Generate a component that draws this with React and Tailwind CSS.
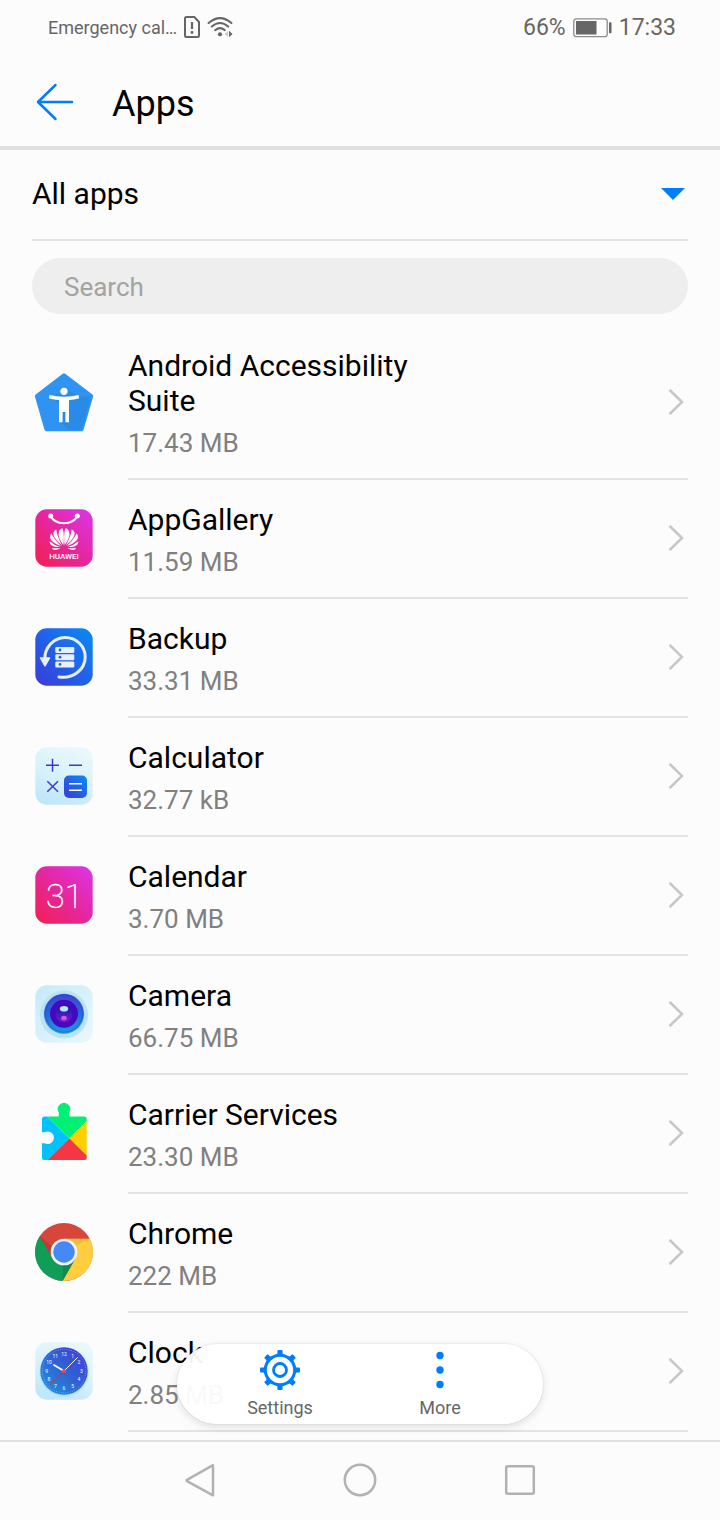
import React from 'react';

function Defs() {
  return (
    <svg className="absolute h-0 w-0" aria-hidden="true">
      <defs>
        <linearGradient id="pink" x1="0" y1="1" x2="1" y2="0">
          <stop offset="0" stopColor="#f3204f" />
          <stop offset="0.5" stopColor="#e5269f" />
          <stop offset="1" stopColor="#dc36ea" />
        </linearGradient>
        <linearGradient id="blue" x1="0" y1="1" x2="1" y2="0">
          <stop offset="0" stopColor="#3a3bd8" />
          <stop offset="0.5" stopColor="#2162ea" />
          <stop offset="1" stopColor="#0a8bf3" />
        </linearGradient>
        <linearGradient id="pale" x1="0.7" y1="0" x2="0.3" y2="1">
          <stop offset="0" stopColor="#e9f8fd" />
          <stop offset="0.5" stopColor="#d8f2fb" />
          <stop offset="1" stopColor="#bfe6fa" />
        </linearGradient>
        <linearGradient id="paleUp" x1="0" y1="0" x2="1" y2="1">
          <stop offset="0" stopColor="#c5eaf9" />
          <stop offset="1" stopColor="#eaf8fd" />
        </linearGradient>
        <linearGradient id="lens" x1="0" y1="0" x2="0" y2="1">
          <stop offset="0" stopColor="#4342d3" />
          <stop offset="0.5" stopColor="#2868dc" />
          <stop offset="1" stopColor="#1b9be4" />
        </linearGradient>
        <linearGradient id="pupil" x1="0" y1="0" x2="0" y2="1">
          <stop offset="0" stopColor="#2410a0" />
          <stop offset="0.5" stopColor="#3a1cc4" />
          <stop offset="1" stopColor="#8a17c4" />
        </linearGradient>
        <linearGradient id="dial" x1="0" y1="1" x2="1" y2="0">
          <stop offset="0" stopColor="#1c9ae0" />
          <stop offset="0.5" stopColor="#2f63d4" />
          <stop offset="1" stopColor="#4438d6" />
        </linearGradient>
      </defs>
    </svg>
  );
}

function AppIcon({ children }) {
  return (
    <svg viewBox="0 0 64 64" className="mb-[3px] h-16 w-16 shrink-0" aria-hidden="true">
      {children}
    </svg>
  );
}

function Tile({ fill }) {
  return <rect x="3.3" y="3.3" width="57.4" height="57.4" rx="11.5" fill={fill} />;
}

function AccessibilityIcon() {
  return (
    <AppIcon>
      <path d="M32 5.3 59.2 26.2 49.6 59.2H14.4L4.9 26.2Z" fill="#2f93f1" stroke="#2f93f1" strokeWidth="4" strokeLinejoin="round" />
      <path d="M18 27 28 34.5V52L36 59.5H49.6L59.2 26.2 47.5 26.5 36 20Z" fill="#2587e2" opacity="0.7" />
      <circle cx="32" cy="21.3" r="3.6" fill="#fff" />
      <path d="M17.5 25Q32 28.4 46.5 25L47.2 28.2Q42 29.6 37 30V52.2H33.4V42H30.6V52.2H27V30Q22 29.6 16.8 28.2Z" fill="#fff" />
    </AppIcon>
  );
}

function GalleryIcon() {
  const half = (
    <g>
      <path d="M31.4 42.6C28 37.5 25.2 31.5 27.2 26.2 28 24.3 29.3 23.5 30.6 23.2 32.3 29.5 32 36 31.4 42.6Z" />
      <path d="M30.2 43C25.5 39 21 33.5 21.4 28.8 21.7 26.8 22.8 25.4 24.3 24.6 25 31.5 27.5 37.5 30.2 43Z" />
      <path d="M29.2 43.8C23.5 41.6 18.6 38.2 18.1 34.2 17.9 32.2 18.4 30.6 19.4 29.4 21.8 35 25.2 39.8 29.2 43.8Z" />
      <path d="M28.2 45C23.5 45.5 19.8 44.2 18.2 41.4 17.7 40.3 17.6 39.2 17.7 38.2 20.8 41.2 24.3 43.5 28.2 45Z" />
      <path d="M28.6 46.3C26 48.4 23.2 49 21.2 47.8 20.6 47.4 20.2 46.9 19.9 46.2 23 46.7 25.8 46.7 28.6 46.3Z" />
    </g>
  );
  return (
    <AppIcon>
      <Tile fill="url(#pink)" />
      <circle cx="18.7" cy="10" r="2.5" fill="#fff" />
      <circle cx="45.3" cy="10" r="2.5" fill="#fff" />
      <path d="M18.7 10C23 19.5 41 19.5 45.3 10" fill="none" stroke="#fff" strokeWidth="2" />
      <g fill="#fff" transform="matrix(1 0 0 0.86 0 2.3)">{half}</g>
      <g fill="#fff" transform="matrix(-1 0 0 0.86 64 2.3)">{half}</g>
      <text x="32" y="53" textAnchor="middle" fontFamily="Roboto, sans-serif" fontSize="8" fontWeight="500" fill="#fff">HUAWEI</text>
    </AppIcon>
  );
}

function BackupIcon() {
  return (
    <AppIcon>
      <Tile fill="url(#blue)" />
      <path d="M12.8 34.5C12.6 22.5 21.5 12.8 32.8 12.4 44.5 12.3 53.4 21.5 53.2 32.4 52.8 44.6 41.5 54 27 52" fill="none" stroke="#e6f0ff" strokeWidth="3" strokeLinecap="round" />
      <path d="M8.5 33H17.5L13 40.8Z" fill="#e6f0ff" stroke="#e6f0ff" strokeWidth="1.5" strokeLinejoin="round" />
      <g fill="#e6f0ff">
        <rect x="23.3" y="22" width="19" height="6" rx="1.2" />
        <rect x="23.3" y="29.2" width="19" height="6" rx="1.2" />
        <rect x="23.3" y="36.4" width="19" height="6" rx="1.2" />
      </g>
      <g fill="#2162ea">
        <circle cx="28" cy="25" r="1.4" />
        <circle cx="28" cy="32.2" r="1.4" />
        <circle cx="28" cy="39.4" r="1.4" />
      </g>
    </AppIcon>
  );
}

function CalculatorIcon() {
  return (
    <AppIcon>
      <Tile fill="url(#pale)" />
      <path d="M14 21.3H27M20.5 14.8V27.8M37 21.3H50M15.3 37.2 26 47.8M26 37.2 15.3 47.8" stroke="#4038c8" strokeWidth="1.5" fill="none" />
      <rect x="32" y="31.5" width="23" height="22.5" rx="5" fill="url(#blue)" />
      <path d="M37 39.7H50M37 46.2H50" stroke="#fff" strokeWidth="1.5" />
    </AppIcon>
  );
}

function CalendarIcon() {
  return (
    <AppIcon>
      <Tile fill="url(#pink)" />
      <text x="32.5" y="44.6" textAnchor="middle" fontFamily="Roboto, sans-serif" fontSize="34" fontWeight="100" fill="#fff" stroke="#fff" strokeWidth="0.5">31</text>
    </AppIcon>
  );
}

function CameraIcon() {
  return (
    <AppIcon>
      <Tile fill="url(#paleUp)" />
      <circle cx="32" cy="32.5" r="24" fill="#b9e3f2" />
      <circle cx="32" cy="31.8" r="20" fill="url(#lens)" />
      <circle cx="32" cy="31.8" r="18.3" fill="none" stroke="#2544b8" strokeWidth="0.7" opacity="0.6" />
      <circle cx="32" cy="31.8" r="14" fill="#4309bc" />
      <circle cx="32" cy="31.8" r="8.5" fill="url(#pupil)" />
      <ellipse cx="32" cy="26.8" rx="4.2" ry="2.8" fill="#b9e6f7" />
      <ellipse cx="32" cy="36" rx="2.8" ry="2.2" fill="#dc55dd" />
    </AppIcon>
  );
}

function CarrierIcon() {
  return (
    <AppIcon>
      <path d="M15 15.5 37.3 37.2 15.5 59H12Q10 59 10 57V42.2H12.5A6.3 6.3 0 1 0 12.5 31.2H10V18Q10 15.5 12.5 15.5Z" fill="#00c3fb" />
      <path d="M15 15.5H26.8V11.6A6.2 6.2 0 1 1 37.2 11.6V15.5H52.5Q54.7 15.5 54.7 18V20L37.3 37.2Z" fill="#00ef75" />
      <path d="M54.7 20V54.5L37.3 37.2Z" fill="#ffd000" />
      <path d="M37.3 37.2 54.7 54.5V57Q54.7 59 52.7 59H15.5Z" fill="#f33745" />
    </AppIcon>
  );
}

function ChromeIcon() {
  return (
    <AppIcon>
      <circle cx="32" cy="32" r="28.9" fill="#d8453a" />
      <path d="M57.8 18.8A29 29 0 0 1 30.5 61L43.4 38.6 32 18.8Z" fill="#ffcd40" />
      <path d="M30.5 61A29 29 0 0 1 7.7 16.3L20.6 38.6H43.4Z" fill="#109d58" />
      <path d="M57.8 18.8H32L43 26Z" fill="#c9a233" opacity="0.35" />
      <path d="M7.7 16.3 20.6 38.6 21 27Z" fill="#7c2d25" opacity="0.3" />
      <path d="M30.5 61 43.4 38.6 31 45Z" fill="#0b6b3c" opacity="0.35" />
      <circle cx="32" cy="32" r="13.3" fill="#f1f3f8" />
      <circle cx="32" cy="32" r="10.7" fill="#4688f4" />
    </AppIcon>
  );
}

function ClockIcon() {
  const numbers = Array.from({ length: 12 }, (_, i) => i + 1);
  return (
    <AppIcon>
      <Tile fill="url(#pale)" />
      <circle cx="32" cy="33" r="24.6" fill="#a9dcf0" opacity="0.6" />
      <circle cx="32" cy="32" r="23.7" fill="url(#dial)" />
      <circle cx="32" cy="32" r="21.8" fill="none" stroke="#fff" strokeWidth="1" strokeDasharray="0.5 1.783" opacity="0.6" />
      <g fill="#fff" fontFamily="Roboto, sans-serif" fontSize="5" textAnchor="middle">
        {numbers.map((n) => {
          const angle = (n * Math.PI) / 6;
          return (
            <text key={n} x={32 + 17.3 * Math.sin(angle)} y={33.8 - 17.3 * Math.cos(angle)}>{n}</text>
          );
        })}
      </g>
      <path d="M32 32 22 26" stroke="#fff" strokeWidth="1.8" strokeLinecap="round" />
      <path d="M32 32 45.5 18.5" stroke="#fff" strokeWidth="1" strokeLinecap="round" />
      <path d="M32 32 18 46" stroke="#a5385e" strokeWidth="0.8" />
      <circle cx="32" cy="32" r="2" fill="#f04458" />
    </AppIcon>
  );
}

const apps = [
  { name: 'Android Accessibility Suite', size: '17.43 MB', Icon: AccessibilityIcon },
  { name: 'AppGallery', size: '11.59 MB', Icon: GalleryIcon },
  { name: 'Backup', size: '33.31 MB', Icon: BackupIcon },
  { name: 'Calculator', size: '32.77 kB', Icon: CalculatorIcon },
  { name: 'Calendar', size: '3.70 MB', Icon: CalendarIcon },
  { name: 'Camera', size: '66.75 MB', Icon: CameraIcon },
  { name: 'Carrier Services', size: '23.30 MB', Icon: CarrierIcon },
  { name: 'Chrome', size: '222 MB', Icon: ChromeIcon },
  { name: 'Clock', size: '2.85 MB', Icon: ClockIcon },
];

function StatusBar() {
  return (
    <div className="flex h-14 items-center justify-between pr-11 pl-12 text-[#666]">
      <div className="flex items-center gap-1.5">
        <span className="text-lg">Emergency cal…</span>
        <svg viewBox="0 0 18 24" className="mb-0.5 h-6 w-[18px]" fill="none" aria-hidden="true">
          <path d="M3.5 2H11.3L16 7V20.5Q16 22 14.5 22H3.5Q2 22 2 20.5V3.5Q2 2 3.5 2Z" stroke="#666" strokeWidth="2" strokeLinejoin="round" />
          <path d="M9 7V14" stroke="#666" strokeWidth="2.2" />
          <circle cx="9" cy="17.5" r="1.4" fill="#666" />
        </svg>
        <svg viewBox="0 0 26 24" className="mb-0.5 h-6 w-[26px]" fill="none" aria-hidden="true">
          <path d="M1.6 8Q13 -1.8 24.4 8M4.8 11.6Q13 4.3 21.2 11.6M8.2 15.2Q13 11 17.8 15.2" stroke="#666" strokeWidth="2" strokeLinecap="round" />
          <circle cx="13" cy="19.3" r="2.1" fill="#666" />
          <path d="M21 16 17.5 19 21 22Z" fill="#ccc" />
          <path d="M22 15.8 25.5 19 22 22.2Z" fill="#666" />
        </svg>
      </div>
      <div className="flex items-center gap-[7px]">
        <span className="text-[23px]">66%</span>
        <svg viewBox="0 0 39 20" className="h-5 w-[39px]" fill="none" aria-hidden="true">
          <rect x="0.8" y="0.8" width="33.4" height="17.9" rx="2.5" stroke="#8c8c8c" strokeWidth="1.3" />
          <rect x="3" y="3" width="20.5" height="13.5" fill="#666" />
          <rect x="36" y="4.3" width="2.5" height="11" rx="0.8" fill="#666" />
        </svg>
        <span className="text-[23px]">17:33</span>
      </div>
    </div>
  );
}

function GearIcon() {
  const angles = [0, 45, 90, 135, 180, 225, 270, 315];
  return (
    <svg viewBox="0 0 42 42" className="h-[42px] w-[42px]" fill="none" stroke="#007dff" aria-hidden="true">
      <circle cx="21" cy="21" r="14.7" strokeWidth="3" />
      <circle cx="21" cy="21" r="6.5" strokeWidth="2.8" />
      {angles.map((a) => (
        <path key={a} d="M16.5 6.2 18.4 4.6V2Q18.4 1 19.4 1H22.6Q23.6 1 23.6 2V4.6L25.5 6.2Z" fill="#007dff" stroke="none" transform={`rotate(${a} 21 21)`} />
      ))}
    </svg>
  );
}

function BottomBar() {
  return (
    <div className="sticky bottom-0">
      <div className="absolute bottom-24 left-1/2 flex h-20 -translate-x-1/2 rounded-full bg-white/95 px-[23px] shadow-[0_3px_8px_rgba(0,0,0,0.12),0_0_2px_rgba(0,0,0,0.14)]">
        <button type="button" className="flex w-40 flex-col items-center pt-[5px]">
          <GearIcon />
          <span className="mt-[5px] text-lg leading-6 text-[#666]">Settings</span>
        </button>
        <button type="button" className="flex w-40 flex-col items-center pt-[5px]">
          <svg viewBox="0 0 42 42" className="h-[42px] w-[42px]" fill="#007dff" aria-hidden="true">
            <circle cx="21" cy="6.5" r="3.7" />
            <circle cx="21" cy="21" r="3.7" />
            <circle cx="21" cy="35.5" r="3.7" />
          </svg>
          <span className="mt-[5px] text-lg leading-6 text-[#666]">More</span>
        </button>
      </div>
      <nav className="flex h-20 justify-center border-t-2 border-[#e0e0e0] bg-[#fcfcfc]" aria-label="System">
        <button type="button" aria-label="Back" className="flex w-40 items-center justify-center">
          <svg viewBox="0 0 36 36" className="h-9 w-9" fill="none" stroke="#b2b2b2" strokeWidth="2.5" strokeLinejoin="round" aria-hidden="true">
            <path d="M31 2.2V32.3L5 18.1Q4 17.5 5 16.8Z" />
          </svg>
        </button>
        <button type="button" aria-label="Home" className="flex w-40 items-center justify-center">
          <svg viewBox="0 0 36 36" className="h-9 w-9" fill="none" stroke="#b2b2b2" strokeWidth="2.5" aria-hidden="true">
            <circle cx="18" cy="17" r="15.2" />
          </svg>
        </button>
        <button type="button" aria-label="Recent apps" className="flex w-40 items-center justify-center">
          <svg viewBox="0 0 36 36" className="h-9 w-9" fill="none" stroke="#b2b2b2" strokeWidth="2.5" aria-hidden="true">
            <rect x="4.2" y="3.2" width="27.6" height="27.6" rx="1.5" />
          </svg>
        </button>
      </nav>
    </div>
  );
}

export default function App() {
  return (
    <div className="flex min-h-screen flex-col bg-[#fcfcfc] font-['Roboto',sans-serif] text-black">
      <Defs />
      <StatusBar />
      <header className="flex h-[94px] items-center gap-9 border-b-4 border-[#e0e0e0] px-9">
        <button type="button" aria-label="Back" className="shrink-0">
          <svg viewBox="0 0 40 40" className="h-10 w-10" fill="none" stroke="#007dff" strokeWidth="2.5" strokeLinecap="round" strokeLinejoin="round" aria-hidden="true">
            <path d="M36 21H2M19.5 4 2 21 19.5 38" />
          </svg>
        </button>
        <h1 className="pt-1.5 text-4xl">Apps</h1>
      </header>
      <main className="flex-1 pb-2">
        <div className="relative mx-8 border-b-2 border-[#e3e3e3]">
          <select aria-label="App filter" className="block h-[89px] w-full appearance-none bg-transparent pb-0.5 text-[30px]">
            <option>All apps</option>
          </select>
          <svg viewBox="0 0 24 12" className="pointer-events-none absolute top-[38px] right-[3px] h-3 w-6" fill="#007dff" aria-hidden="true">
            <path d="M0 0H24L12 12Z" />
          </svg>
        </div>
        <div className="mx-8 mt-[17px] mb-3">
          <input type="search" aria-label="Search" placeholder="Search" className="block h-14 w-full rounded-full bg-[#eee] px-8 pt-0.5 text-[26px] placeholder:text-[#a3a3a3]" />
        </div>
        <ul className="px-8">
          {apps.map(({ name, size, Icon }) => (
            <li key={name}>
              <a href="#" className="flex items-center gap-8">
                <Icon />
                <div className="flex flex-1 items-center justify-between border-b-2 border-[#e3e3e3] pt-[22px] pb-[17px]">
                  <div className="max-w-3/5">
                    <div className="text-[30px] leading-[35px]">{name}</div>
                    <div className="mt-[7px] text-[26px] leading-9 text-[#808080]">{size}</div>
                  </div>
                  <svg viewBox="0 0 16 28" className="mr-1 mb-1.5 h-7 w-4 shrink-0" fill="none" stroke="#c7c7c7" strokeWidth="2.5" strokeLinecap="round" aria-hidden="true">
                    <path d="M2.2 2.5 14 14 2.2 25.5" />
                  </svg>
                </div>
              </a>
            </li>
          ))}
        </ul>
      </main>
      <BottomBar />
    </div>
  );
}
